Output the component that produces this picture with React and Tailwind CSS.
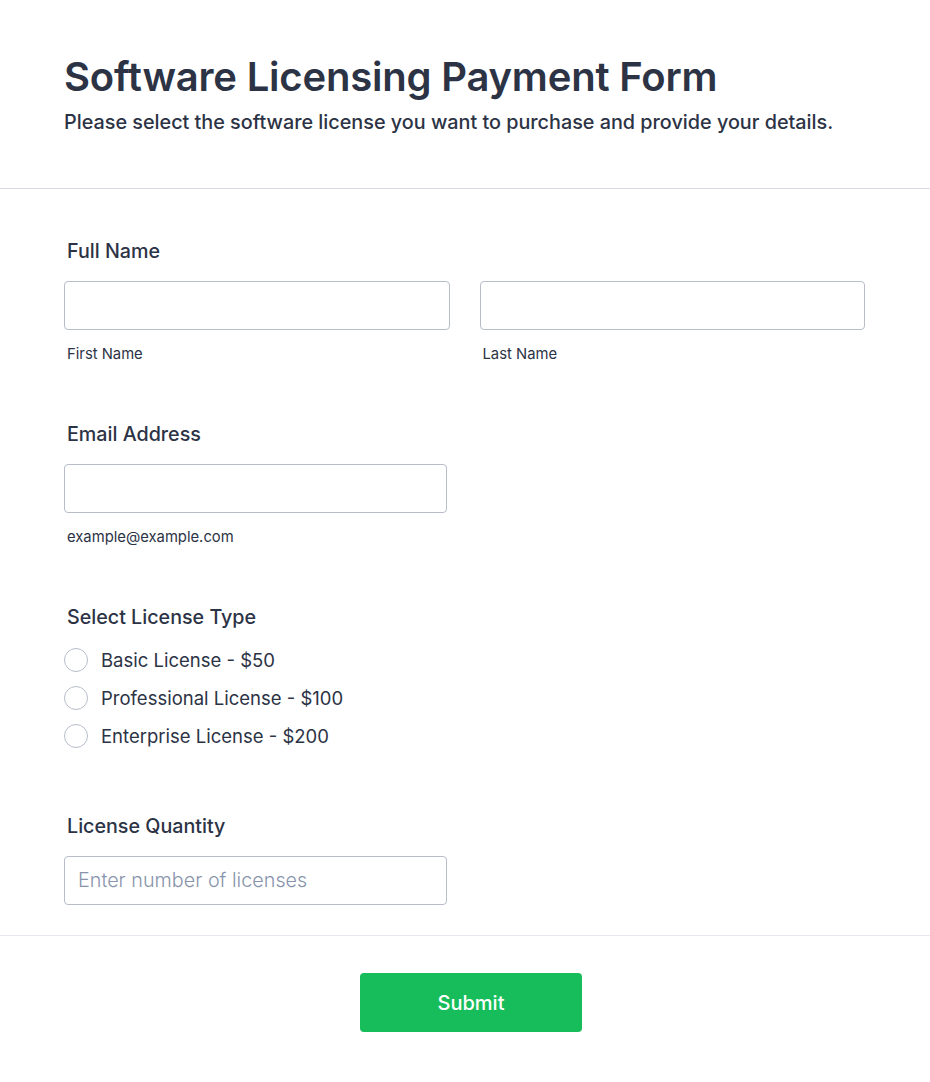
export default function App() {
  const font = { fontFamily: 'Inter, "Noto Sans", sans-serif' };
  const radios = ["Basic License - $50", "Professional License - $100", "Enterprise License - $200"];
  return (
    <div className="w-[930px] min-h-[1082px] bg-white text-[#2c3345]" style={font}>
      <div className="px-[64px] pt-[53px] pb-[52px] border-b border-[#d8dae9]">
        <h1 className="text-[40px] leading-[48px] font-semibold tracking-[-0.2px]">Software Licensing Payment Form</h1>
        <p className="mt-[8px] text-[19.8px] leading-[27px] font-medium">Please select the software license you want to purchase and provide your details.</p>
      </div>
      <div className="px-[64px] pt-[50px] pb-[30px] border-b border-[#e6e8ef]">
        <div className="pl-[3px] text-[19.7px] leading-[24px] font-medium">Full Name</div>
        <div className="mt-[18px] grid grid-cols-2 gap-[30px] w-[801px]">
          <div>
            <div className="h-[49px] rounded-[4px] border border-[#b8bdc9]" />
            <div className="mt-[14px] pl-[3px] text-[14.8px] leading-[20px]">First Name</div>
          </div>
          <div>
            <div className="h-[49px] rounded-[4px] border border-[#b8bdc9]" />
            <div className="mt-[14px] pl-[3px] text-[14.8px] leading-[20px]">Last Name</div>
          </div>
        </div>

        <div className="mt-[58px] pl-[3px] text-[19.7px] leading-[24px] font-medium">Email Address</div>
        <div className="mt-[18px] w-[383px] h-[49px] rounded-[4px] border border-[#b8bdc9]" />
        <div className="mt-[14px] pl-[3px] text-[14.8px] leading-[20px]">example@example.com</div>

        <div className="mt-[58px] pl-[3px] text-[19.7px] leading-[24px] font-medium">Select License Type</div>
        <div className="mt-[12px] flex flex-col">
          {radios.map((r) => (
            <div key={r} className="h-[38px] flex items-center gap-[13px]">
              <span className="w-[24px] h-[24px] rounded-full border border-[#b8bdc9] bg-white" />
              <span className="text-[18.5px] leading-[24px]">{r}</span>
            </div>
          ))}
        </div>

        <div className="mt-[59px] pl-[3px] text-[19.7px] leading-[24px] font-medium">License Quantity</div>
        <div className="mt-[18px] w-[383px] h-[49px] rounded-[4px] border border-[#b8bdc9] flex items-center px-[13px]">
          <span className="text-[19.8px] text-[#8894ab] font-light">Enter number of licenses</span>
        </div>
      </div>
      <div className="flex justify-center pt-[37px] pl-[12px]">
        <button className="w-[222px] h-[59px] rounded-[4px] bg-[#18bd5b] text-white text-[20px] font-medium">Submit</button>
      </div>
    </div>
  );
}
